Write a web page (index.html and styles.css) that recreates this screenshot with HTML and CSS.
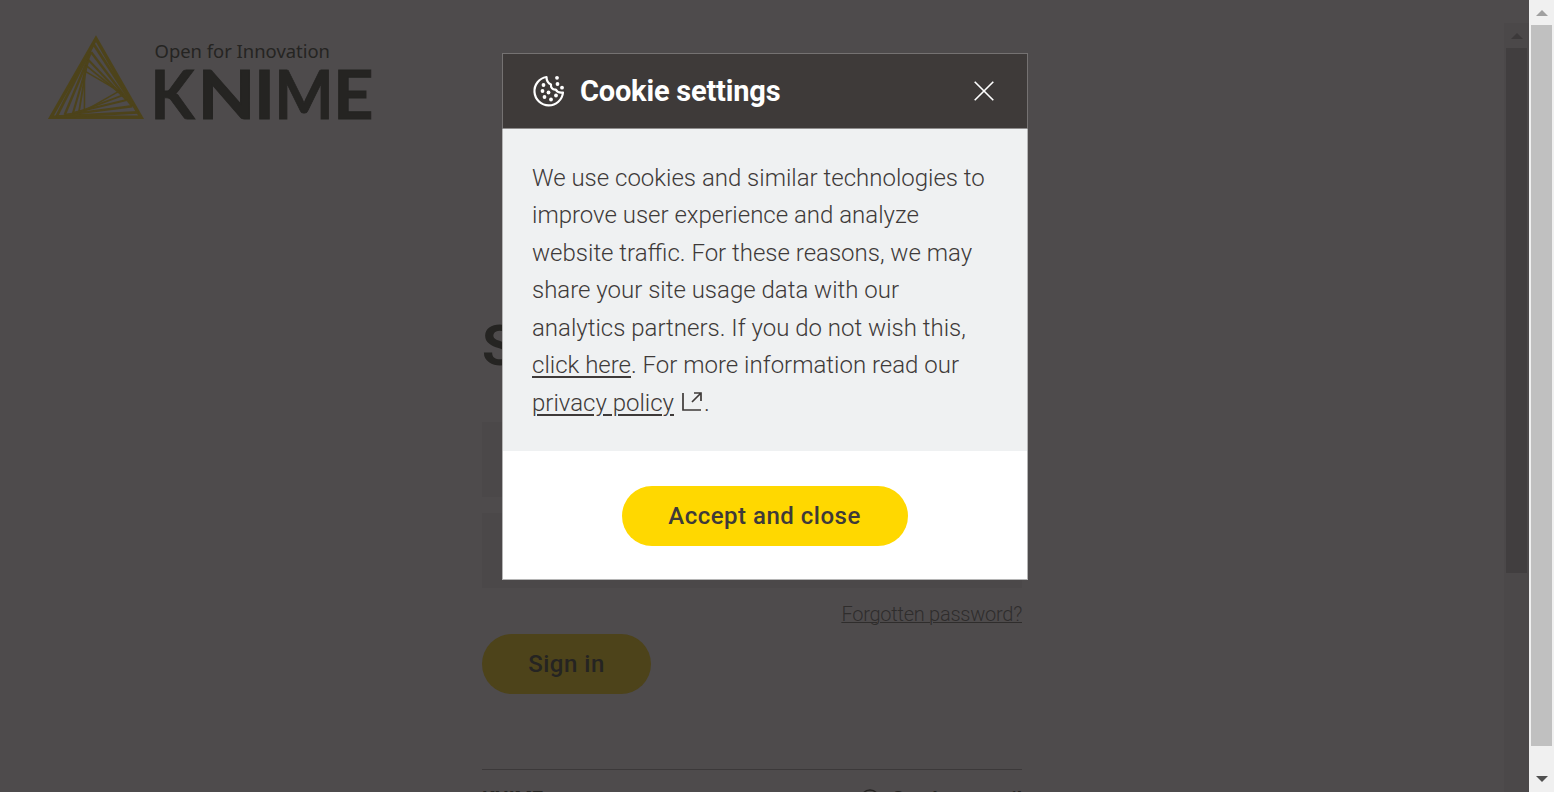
FILE: index.html
```html
<!DOCTYPE html>
<html lang="en">
<head>
<meta charset="utf-8">
<title>KNIME – Sign in</title>
<link rel="stylesheet" href="styles.css">
</head>
<body>
<div class="window">
  <div class="page">
    <header class="header">
      <svg class="logo" width="326" height="88" viewBox="0 0 326 88">
        <defs>
          <g id="fan">
            <path stroke-width="2.700" d="M45.500 9 L8.500 81.700"/>
            <path stroke-width="2.400" d="M43 17 L16.700 79.800"/>
            <path stroke-width="2.100" d="M40.500 25 L25 78"/>
            <path stroke-width="1.800" d="M38.500 31 L31 76.700"/>
            <path stroke-width="1.500" d="M36.500 35 L36.400 76"/>
          </g>
        </defs>
        <g class="logo-mark">
          <path stroke-width="3.400" d="M48 3.600 L2.900 82.300 H93.100 Z"/>
          <use href="#fan"/>
          <use href="#fan" transform="rotate(120 48 56)"/>
          <use href="#fan" transform="rotate(240 48 56)"/>
        </g>
        <text class="logo-tagline" x="106.500" y="23.400" textLength="175.500" lengthAdjust="spacingAndGlyphs">Open for Innovation</text>
        <text class="logo-name" y="83.700"><tspan x="102.500" textLength="44" lengthAdjust="spacingAndGlyphs">K</tspan><tspan x="149.500" textLength="58" lengthAdjust="spacingAndGlyphs">N</tspan><tspan x="206" textLength="21" lengthAdjust="spacingAndGlyphs">I</tspan><tspan x="226.500" textLength="59" lengthAdjust="spacingAndGlyphs">M</tspan><tspan x="285" textLength="40.500" lengthAdjust="spacingAndGlyphs">E</tspan></text>
      </svg>
    </header>
    <main class="signin">
      <h1 class="title">Sign in</h1>
      <div class="field"></div>
      <div class="field"></div>
      <a class="forgot">Forgotten password?</a>
      <span class="button button-dim">Sign in</span>
      <footer class="footer">
        <span>KNIME</span>
        <span class="contact"><svg width="20" height="20" viewBox="0 0 20 20"><circle cx="10" cy="10" r="9"/><circle cx="10" cy="10" r="4.500"/></svg>Send us a mail</span>
      </footer>
    </main>
    <div class="dialog">
      <div class="dialog-head">
        <svg class="cookie" width="32" height="32" viewBox="0 0 32 32">
          <path d="M13.500 2 A14.300 14.300 0 1 0 30 17.500 C27 18 24 17 22.800 14.500 C19.500 15 17.500 12.500 18 9.500 C15.500 8.500 13.500 6 13.500 2 Z"/>
          <g class="crumbs"><circle cx="24" cy="2.800" r="1.900"/><circle cx="24.500" cy="9" r="1.900"/><circle cx="29" cy="12.700" r="1.900"/><circle cx="10.500" cy="10" r="1.900"/><circle cx="9.500" cy="16" r="1.900"/><circle cx="15.500" cy="17.500" r="1.900"/><circle cx="11.500" cy="22" r="1.900"/><circle cx="18" cy="24.500" r="1.900"/><circle cx="23" cy="20.500" r="1.900"/></g>
        </svg>
        <h2 class="dialog-title">Cookie settings</h2>
        <svg class="close" width="20" height="20" viewBox="0 0 20 20"><path d="M.7.700 19.300 19.300 M19.300.700.700 19.300"/></svg>
      </div>
      <p class="dialog-text">We use cookies and similar technologies to<br>improve user experience and analyze<br>website traffic. For these reasons, we may<br>share your site usage data with our<br>analytics partners. If you do not wish this,<br><a class="link">click here</a>. For more information read our<br><a class="link">privacy policy</a><svg class="external" width="20" height="20" viewBox="0 0 20 20"><path d="M1 1 V18 H19 M10 10 L19 1 M12 1 H19 V9"/></svg>.</p>
      <div class="dialog-foot"><span class="button">Accept and close</span></div>
    </div>
    <div class="inner-bar">
      <svg width="12" height="6" viewBox="0 0 12 6"><path d="M0 6 L6 0 L12 6Z"/></svg>
      <div class="inner-thumb"></div>
    </div>
  </div>
  <div class="scrollbar">
    <svg class="arrow-up" width="12" height="6" viewBox="0 0 12 6"><path d="M0 6 L6 0 L12 6Z"/></svg>
    <div class="thumb"></div>
    <svg class="arrow-down" width="12" height="6" viewBox="0 0 12 6"><path d="M0 0 L6 6 L12 0Z"/></svg>
  </div>
</div>
</body>
</html>
```
FILE: styles.css
```css
* { box-sizing: border-box; }
body { margin: 0; font-family: Roboto, sans-serif; overflow: hidden; }
.window { display: flex; width: 1554px; height: 792px; }
.page { position: relative; flex: 1; overflow: hidden; background: #4e4b4c; color: #252422; }
.header { height: 318px; padding: 35px 0 0 48px; }
.logo { display: block; overflow: visible; }
.logo-mark { fill: none; stroke: #4d431a; }
.logo-tagline { font: 18px "Noto Sans", sans-serif; fill: #252422; }
.logo-name { font: 700 66.5px Lato, sans-serif; fill: #252422; stroke: #252422; stroke-width: 0.9; }
.signin { display: flex; flex-direction: column; width: 540px; margin-left: 482px; }
.title { height: 104px; margin: 0; font-size: 56px; line-height: 56px; font-weight: 700; }
.field { height: 75px; margin-bottom: 16px; background: #4b4849; }
.forgot { align-self: flex-end; margin-top: -2px; height: 32px; color: #2f2d2c; font-size: 20px; line-height: 24px; font-weight: 300; letter-spacing: -0.25px; text-decoration: underline; text-decoration-thickness: 1px; }
.button { display: flex; align-items: center; justify-content: center; width: 286px; height: 60px; border-radius: 30px; background: #ffd800; color: #3e3a39; font-size: 24px; font-weight: 500; letter-spacing: 0.5px; }
.button-dim { width: 169px; background: #4d431a; color: #252422; }
.footer { display: flex; justify-content: space-between; margin-top: 75px; padding-top: 17px; border-top: 1px solid #3c393a; font-size: 20px; line-height: 24px; font-weight: 700; letter-spacing: -0.1px; }
.contact { display: flex; align-items: center; gap: 12px; }
.contact svg { fill: none; stroke: #252422; stroke-width: 1.5; }
.dialog { position: absolute; left: 502px; top: 53px; width: 526px; height: 527px; background: #fff; border: 1px solid #b5b5b5; }
.dialog-head { display: flex; align-items: center; box-sizing: content-box; height: 74px; margin: -1px -1px 0; padding: 0 33px 0 30px; border: 1px solid #757272; border-bottom-color: #8f8d8d; background: #3e3a39; }
.cookie { fill: none; stroke: #fff; stroke-width: 2.2; stroke-linejoin: round; overflow: visible; }
.crumbs { fill: #fff; stroke: none; }
.dialog-title { flex: 1; margin: 0 0 0 15px; color: #fff; font-size: 29px; line-height: 34px; font-weight: 700; letter-spacing: -0.2px; white-space: nowrap; }
.close { fill: none; stroke: #fff; stroke-width: 1.6; }
.dialog-text { height: 322px; margin: 0; padding: 30.5px 0 0 29px; background: #eff1f2; color: #3e3a39; font-size: 24px; line-height: 37.5px; font-weight: 300; white-space: nowrap; }
.link { text-decoration: underline; text-decoration-thickness: 2px; text-underline-offset: 3px; }
.external { margin: 0 2px 0 8px; vertical-align: -1px; fill: none; stroke: #3e3a39; stroke-width: 1.7; }
.dialog-foot { display: flex; justify-content: center; padding: 35px 1px 0 0; }
.inner-bar { position: absolute; left: 1504px; top: 23px; width: 25px; height: 769px; padding: 10px 2px 0; background: #4b4849; }
.inner-bar svg { display: block; margin: 0 auto 9px; fill: #3c393a; }
.inner-thumb { height: 525px; background: #413e3f; }
.scrollbar { display: flex; flex-direction: column; align-items: center; width: 25px; padding: 10px 0; background: #f0f0f0; }
.thumb { width: 21px; height: 721px; margin-top: 9px; background: #c0c0c0; }
.arrow-up { fill: #a0a0a0; }
.arrow-down { margin-top: 30px; fill: #505050; }
```
